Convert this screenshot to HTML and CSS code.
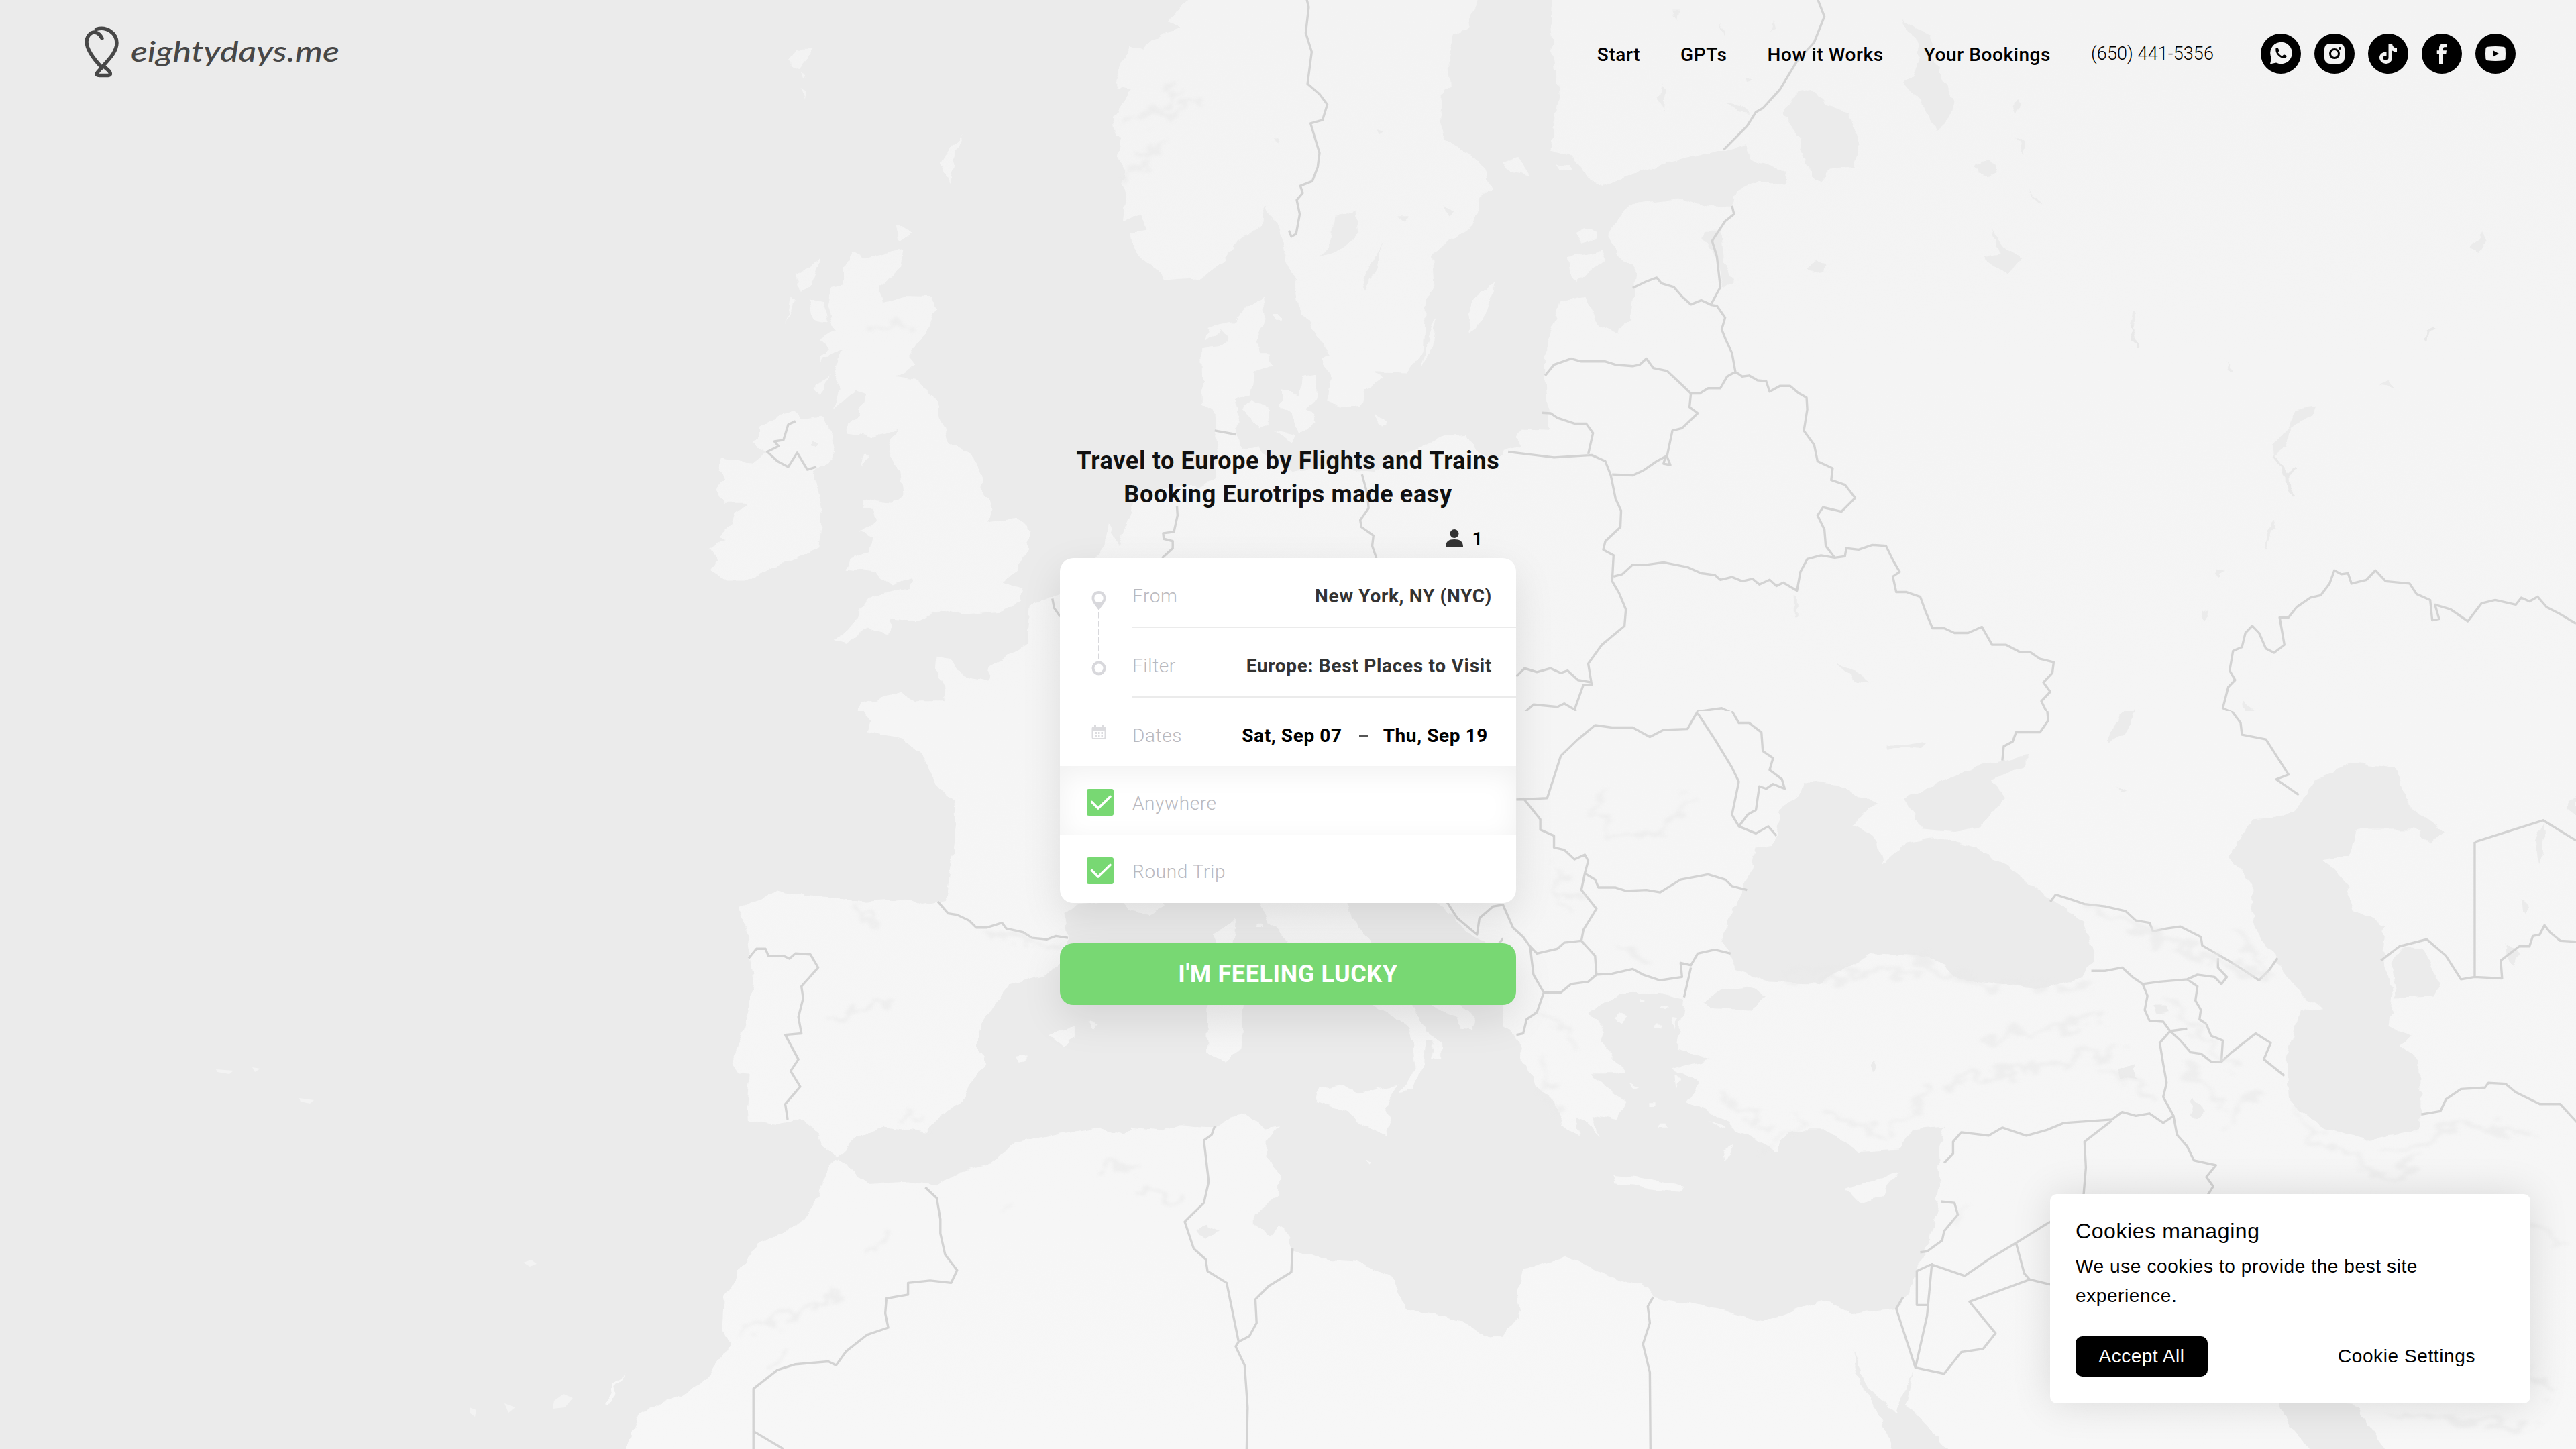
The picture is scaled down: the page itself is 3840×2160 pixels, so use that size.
FILE: index.html
```html
<!DOCTYPE html>
<html lang="en">
<head>
<meta charset="utf-8">
<title>eightydays.me</title>
<link rel="stylesheet" href="styles.css">
</head>
<body>
<svg class="map" viewBox="0 0 3840 2160" aria-hidden="true">
  <defs>
    <linearGradient id="north" gradientUnits="userSpaceOnUse" x1="0" y1="0" x2="0" y2="1568"><stop offset="0" stop-color="#f3f3f3"/><stop offset="1" stop-color="#f5f5f5"/></linearGradient>
    <linearGradient id="south" gradientUnits="userSpaceOnUse" x1="0" y1="0" x2="0" y2="1568"><stop offset="0" stop-color="#f5f5f5"/><stop offset=".7" stop-color="#f6f6f6"/><stop offset="1" stop-color="#f7f7f7"/></linearGradient>
    <filter id="coast" filterUnits="userSpaceOnUse" x="-30" y="-30" width="1628" height="1628" color-interpolation-filters="sRGB">
      <feTurbulence type="fractalNoise" baseFrequency=".04" numOctaves="2" seed="4" result="n"/>
      <feDisplacementMap in="SourceGraphic" in2="n" scale="15" xChannelSelector="R" yChannelSelector="G"/>
    </filter>
    <filter id="soft" filterUnits="userSpaceOnUse" x="-30" y="-30" width="1628" height="1628" color-interpolation-filters="sRGB">
      <feTurbulence type="fractalNoise" baseFrequency=".03" numOctaves="3" seed="9" result="n"/>
      <feDisplacementMap in="SourceGraphic" in2="n" scale="70" xChannelSelector="R" yChannelSelector="G"/>
      <feGaussianBlur stdDeviation="3"/>
    </filter>
  </defs>
  <rect class="sea" width="3840" height="2160"/>
  <g class="land-w">
    <path d="M322 1594l26 2-6 5-18-3zM376 1591l12 2-8 5zM446 1637l22 3-6 5-14-3zM780 1882l12-4 8 6-10 4zM700 2098l10 4-2 10-8-6zM752 2092l16 6-10 8zM826 2088l14-10 14 6-12 14-18 2zM905 2078l14-22 6-2-14 40z"/>
  </g>
  <svg x="900" y="0" width="1400" height="1100" viewBox="0 0 1568 1568" preserveAspectRatio="none">
    <rect class="sea" width="1568" height="1568"/>
    <g filter="url(#coast)">
      <g fill="url(#north)">
        <path d="M1000-20L960 15 942 45 968 62 940 70 915 85 900 105 880 95 870 125 855 160 862 185 880 190 865 220 850 250 853 280 862 300 858 345 872 365 865 390 872 420 868 470 900 455 903 490 880 495 882 525 900 555 930 578 935 595 1000 590 1030 560 1060 510 1100 480 1102 432 1115 465 1135 485 1130 500 1140 560 1155 600 1160 650 1185 700 1215 755 1197 765 1215 800 1210 855 1235 868 1265 862 1272 830 1300 800 1285 790 1340 792 1370 740 1372 640 1385 620 1382 540 1410 515 1450 480 1465 420 1482 400 1470 360 1450 330 1405 300 1398 260 1400 190 1412 180 1410 120 1420 75 1440 60 1465-20Z"/>
        <path d="M1100 632L1075 650 1050 685 1010 695 1005 725 1030 700 1045 715 1030 735 998 740 1000 860 1020 880 1020 915 1027 960 1017 1019 994 1038 971 1031 929 1041 888 1060 875 1107 862 1159 842 1112 837 1159 820 1186 800 1240 740 1275 710 1285 705 1370 645 1415 640 1448 600 1435 580 1400 555 1395 553 1425 568 1460 570 1490 520 1490 495 1470 430 1495 425 1510 455 1550 438 1600 1600 1600 1600 905 1520 910 1525 940 1510 960 1484 974 1459 960 1443 922 1402 926 1340 964 1284 1002 1202 993 1150 1002 1109 974 1094 950 1065 955 1055 920 1060 885 1055 850 1080 835 1085 790 1118 775 1115 750 1095 750 1090 710 1105 680Z"/>
        <path d="M1065 870L1085 850 1112 870 1112 900 1095 910ZM1130 830L1160 840 1165 800 1190 795 1190 840 1175 870 1190 895 1160 920 1150 880 1130 865ZM1120 915L1155 925 1150 940ZM1290 880L1308 895 1298 905ZM1390 670L1365 780 1382 740ZM1488 600L1450 640 1442 665 1448 710 1475 660ZM1515 335L1540 350 1535 372 1505 352Z"/>
        <path d="M415 535L435 548 500 530 495 570 460 610 465 640 500 630 550 632 555 655 530 720 510 760 520 775 490 800 520 805 550 840 560 870 575 940 610 960 635 1020 632 1050 648 1080 640 1110 690 1102 712 1130 710 1170 690 1210 665 1240 698 1250 695 1280 660 1300 600 1305 560 1295 520 1320 480 1315 475 1350 440 1335 405 1368 382 1360 410 1340 430 1290 450 1265 510 1250 515 1230 480 1245 455 1215 405 1210 410 1190 445 1170 450 1140 425 1130 455 1110 450 1080 430 1080 432 1062 480 1070 500 1050 495 1000 475 960 490 910 450 930 410 920 405 905 425 880 435 840 420 830 385 870 395 820 385 800 395 740 360 770 375 740 360 720 385 700 375 650 380 610 400 605 400 570Z"/>
        <path d="M318 872L290 885 262 905 262 930 248 940 275 960 250 985 195 972 190 1000 200 1020 188 1040 200 1070 240 1070 220 1090 215 1115 190 1140 205 1145 175 1165 190 1190 178 1210 205 1235 240 1235 270 1215 300 1195 360 1165 365 1100 358 1040 350 1000 375 985 390 960 380 940 382 920 360 885 330 890Z"/>
        <path d="M435 960L442 970 430 992ZM362 548L345 565 320 580 330 620 345 610ZM312 630L306 690 318 640ZM340 635L365 640 375 685 350 680ZM380 795L350 825 360 840ZM490 475L512 495 495 515ZM600 285L570 330 562 345 578 388 585 340ZM350 105L320 105 308 130 325 147 340 125ZM330 155l8 5-4 8zM330 185l8 10-2 16zM1120 670h10v8h-10z"/>
      </g>
      <g class="sea"><path d="M1220 460L1255 450 1258 500 1230 530 1195 545 1215 515ZM1298 518L1265 600 1270 615 1290 570ZM1325 458h22l-8 14zM1405 435l12 12-8 10zM1120 290l8 4-2 12zM1288 275l14 4-8 8zM345 935h10v12h-10z"/></g>
    </g>
    <path class="border" d="M1172-10L1177 15 1172 70 1182 110 1175 178 1195 200 1208 222 1200 255 1180 262 1195 325 1192 355 1183 385 1163 395 1167 410 1157 425 1162 455 1156 497 1148 503 1144 490M320 895L308 902 300 935 285 938 292 948 273 960 290 980 308 992 323 962 340 998 355 992M1020 915L1055 923M957 1075L958 1095 952 1130 934 1133 935 1145 950 1150 950 1165 932 1186M1266 1008L1275 1050 1277 1080 1263 1105 1265 1120 1285 1138 1283 1160 1290 1186M749 1272L752 1292 762 1310M1508 957L1568 968"/>
    <path class="relief" filter="url(#soft)" d="M870 255L930 245 985 220M890 330L950 300M930 230L960 190M880 380L910 350M450 700L500 690"/>
  </svg>
  <svg x="900" y="1060" width="1400" height="1100" viewBox="0 0 1568 1568" preserveAspectRatio="none">
    <rect class="sea" width="1568" height="1568"/>
    <g filter="url(#coast)">
      <g fill="url(#south)">
        <path d="M425-20L445 20 440 45 500 60 530 90 545 135 560 165 585 190 588 240 583 300 575 370 570 405 530 412 510 400 430 405 375 395 330 390 290 380 265 400 230 415 225 435 240 460 245 520 250 570 240 640 230 690 215 750 225 770 245 772 240 840 242 872 290 878 330 865 350 885 362 920 390 948 430 900 470 885 540 895 560 860 600 830 615 780 640 750 625 720 625 680 650 630 680 580 740 560 765 530 775 475 770 430 790 410 860 400 880 425 910 432 935 415 930 390 1090 390 1110 450 1140 480 1160 520 1300 640 1345 670 1350 700 1355 760 1330 810 1350 805 1370 750 1372 700 1385 700 1380 740 1398 740 1398 705 1375 680 1360 650 1340 600 1400 640 1425 650 1432 675 1450 678 1455 650 1430 620 1290 510 1250 440 1240 390 1360 390 1410 425 1440 470 1470 490 1500 500 1520 640 1525 680 1600 790 1600-20Z"/>
        <path d="M1055 440L1052 500 1030 510 1018 475 1040 460ZM1010 600L1070 600 1062 720 1035 745 1008 725ZM1195 800L1230 795 1260 810 1325 795 1305 840 1315 870 1305 900 1270 880 1240 850 1190 830ZM785 670L745 690 765 712 785 695ZM808 660L825 665 820 678ZM690 735l14-2 0 10-10 4zM1088 453h12v6h-12zM1272 952l8 4-4 6z"/>
        <path d="M390 955L375 970 360 1030 330 1085 255 1135 225 1190 200 1250 198 1310 210 1350 170 1420 130 1455 60 1490 30 1600 1600 1600 1600 1160 1568 1170 1525 1210 1530 1280 1505 1330 1480 1335 1440 1300 1340 1270 1315 1200 1260 1170 1200 1165 1150 1145 1140 1110 1125 1095 1115 1115 1085 1090 1085 1070 1128 1030 1128 985 1105 945 1105 915 1128 880 1105 885 1070 855 1045 862 1020 885 960 880 930 890 880 885 865 900 830 885 760 898 690 915 640 965 590 980 555 1010 510 1000 440 1005 410 975 400 958Z"/>
        <path d="M38 1408L20 1425 2 1472 12 1470 20 1435Z"/>
      </g>
      <path class="sea" d="M985 1105L1005 1090 1028 1105 1010 1122Z"/>
    </g>
    <path class="border" d="M558 405L575 430 590 433 610 445 622 460 640 460 665 450 672 462 700 470 715 482 740 485 755 478 775 482M242 525L255 505 270 505 275 520 300 520 310 526 320 515 345 517 358 545 330 585 333 610 325 650 330 685 303 688 325 740 312 765 328 798 303 835 307 868M537 1012L556 1035 562 1080 562 1110 570 1155 590 1188 580 1215 545 1210 508 1215 508 1240 472 1248 470 1280 475 1310 440 1325 405 1360 388 1390 375 1382 320 1388 290 1400 250 1440 250 1590M250 1530L300 1568M1020 882L1015 900 1002 912 1010 1000 1002 1045 970 1085 985 1142 1005 1165 1008 1190 1040 1215 1060 1340 1078 1328 1090 1300 1088 1250 1110 1222 1148 1192 1150 1142M1060 1340L1055 1350 1070 1390 1075 1480 1073 1590M1405 400L1425 440 1458 475 1462 440 1485 415 1500 412 1538 450 1530 475M1495 493L1512 468 1530 475 1550 510 1555 590 1568 600M1525 685L1545 650 1550 630 1568 625M1523 185L1568 180M1545 185L1568 250"/>
    <path class="relief" filter="url(#soft)" d="M380 655L430 645 475 610M235 1315L270 1300 330 1275 390 1245M450 1140L475 1110M270 1380L300 1370M900 1020L970 1035M670 1060L682 1050M640 470L700 490 760 500M840 965L890 975M430 425L445 445M490 875L530 865"/>
  </svg>
  <svg x="2240" y="0" width="1600" height="1100" viewBox="0 0 1568 1568" preserveAspectRatio="none">
    <rect class="sea" width="1568" height="1568"/>
    <g filter="url(#coast)">
      <g fill="url(#north)">
        <path d="M72-20L70 60 80 200 70 320 100 330 130 385 150 395 190 370 260 340 320 320 355 305 360 340 410 365 412 390 375 385 340 405 335 440 300 440 260 422 190 432 165 465 155 500 170 550 195 565 190 650 188 680 165 705 140 690 120 630 85 640 72 700 60 740 62 830 68 912 25 910 20 930 28 950-20 965-20 1600 1600 1600 1600-20Z"/>
        <path d="M105 495L120 485 138 492 138 510 115 520ZM95 545L145 530 150 550 110 600 97 575ZM0 345L25 335 42 375 10 365ZM80 350l18 2 0 10-16 0z"/>
      </g>
      <g class="sea"><path d="M450 188L475 225 505 240 522 310 510 355 480 360 463 388 450 370 430 290 412 240 430 195ZM585 38L605 60 625 75 630 130 658 215 655 245 632 275 615 225 585 175 600 160 610 120 600 80ZM706 342l13 8 2 14-12 10-14-6-4-14zM712 482L735 530 757 550 738 585 705 545 725 540ZM458 553l14 12-6 12-14 4-6-14zM295 490L320 490 322 550 335 600 325 612 310 540 292 510ZM1185 865L1160 870 1148 910 1125 945 1127 970 1145 950 1150 910 1180 885ZM1432 490L1425 510 1415 530 1425 540 1436 510ZM750 212l5 10-5 20-4-14zM752 290l8 10 4 28-8-12zM765 400l22 36-8-6zM328 218l20 6 10 18-16-2zM232 175l6 20-2 44-8-30zM248 22l8 0-2 24zM318 50l8 16-2 10zM395 40l4 20-6 4zM355 165l10 8-8 4zM1278 818l14-10 12 18-12-6zM1055 765l14 24-4 2zM488 1412l36 20 10 20-16-4zM920 660l4 6-2 30-6-6zM1126 1105l4 4-18 60-2-6zM1042 1212l12 4-8 10zM1020 1300l14-4-10 22zM1080 1485l20 26-12 4zM925 1505l-14 60-24 3 22-30zM426 1265l4 4 0 40-4 0z"/></g>
      <path class="river" d="M1127 970L1147 1010 1148 1040 1158 1055M1147 1010L1162 992M918 690L926 738M1348 725L1350 705 1362 695"/>
    </g>
    <path class="border" d="M458-10L470 35 455 90 430 130 405 190 380 230 370 238 357 268 323 318M335 437L338 455 325 470 306 512 313 545 318 610 305 645M190 612L210 598 225 590 232 602 250 610 262 630 275 647 290 638 305 648 313 650 325 675 320 700 326 722 335 750 340 790M62 798L75 775 100 762 115 768 150 768 165 775 190 778 200 775 210 762 220 782 240 788 262 818 275 836 288 836 300 825 318 825 328 800 340 790 350 800 360 798 372 808 385 810 390 832 405 820 420 820 432 835 444 845 445 870 440 915 455 945 460 980 482 995 480 1020 500 1030 515 1058 495 1087 468 1078 460 1095 470 1125 472 1160 485 1185M275 836L273 865 285 878 262 910 248 915 240 970 245 988 235 985 238 970 225 980 205 1000 190 1010 160 1008M57 877L70 878 80 888 105 900 122 900 132 920 125 965M8 960L75 972 130 967 150 980 158 1010 165 1060 173 1085 172 1120 150 1150 147 1168 162 1180 160 1235 170 1260 180 1295 178 1330 145 1370 125 1410 130 1455 118 1455 105 1508M162 1225L175 1220 190 1200 210 1200 235 1195 270 1205 290 1218 310 1222 318 1232 335 1226 350 1235 365 1230 375 1242 390 1232 400 1245 410 1238 430 1255 435 1215 445 1188 465 1180 485 1185 500 1182 502 1165 520 1168 540 1158 560 1160 570 1190 580 1215 570 1225 575 1258 590 1258 610 1268 618 1300 628 1335 645 1335 660 1345 680 1345 700 1332 715 1370 735 1370 755 1385 770 1385 785 1400 805 1407 803 1430 790 1450 800 1470 787 1490 797 1520 793 1553 760 1555 750 1580M20 1437L32 1420 50 1428 70 1420 85 1430 95 1425 110 1445 130 1450M20 1530L45 1497 80 1502 90 1495 105 1508 115 1528 135 1540 160 1542 175 1550 200 1550 215 1565 230 1550 270 1545 285 1512 320 1505 350 1525 360 1540 378 1550 382 1580M110 1568L135 1540M280 1520L300 1545 305 1580M1115 1568L1095 1560 1080 1560 1070 1540 1075 1520 1052 1505 1060 1460 1070 1445 1062 1425 1067 1383 1080 1375 1085 1345 1095 1330 1105 1345 1115 1378 1127 1387 1142 1370 1135 1312 1148 1312 1160 1290 1180 1270 1195 1265 1208 1240 1215 1212 1225 1220 1235 1218 1240 1240 1262 1232 1275 1212 1290 1235 1325 1240 1335 1262 1355 1275 1358 1318 1368 1315 1362 1285 1385 1295 1410 1320 1430 1282 1450 1275 1480 1285 1488 1270 1500 1278 1512 1268 1525 1290 1545 1305 1568 1325"/>
  </svg>
  <svg x="2240" y="1060" width="1600" height="1100" viewBox="0 0 1568 1568" preserveAspectRatio="none">
    <g filter="url(#coast)">
      <rect x="-30" y="-30" width="1628" height="1628" fill="url(#south)"/>
      <path class="sea" d="M-20 660L0 670 20 690 30 740 50 800 75 830 90 880 112 905 105 860 125 875 140 905 132 860 165 870 180 830 130 770 165 770 178 765 140 700 150 680 125 640 170 600 230 600 265 610 255 720 300 740 250 760 290 790 270 830 330 870 340 890 400 935 420 890 470 890 520 935 580 930 600 890 645 885 635 930 640 1010 625 1120 590 1240 575 1270 510 1280 470 1250 380 1298 330 1275 220 1245 210 1225 145 1195 95 1160 30 1185 20 1240 27 1285 0 1330-20 1335ZM290 620L320 590 360 585 385 605 360 635 310 632ZM440 150L490 155 520 180 550 195 510 240 545 265 555 325 590 280 640 268 690 290 740 330 800 400 850 450 865 520 845 570 790 590 720 580 670 570 620 520 540 515 500 545 460 580 390 575 340 550 320 480 340 410 360 350 370 290 395 285 410 200 435 180ZM585 185L640 150 700 115 765 95 765 115 715 145 735 185 700 245 660 255 610 250 600 215ZM1185 150L1240 108 1305 120 1320 195 1375 255 1355 280 1330 250 1250 250 1235 310 1200 315 1235 370 1245 425 1290 455 1285 530 1300 600 1295 670 1325 690 1310 710 1340 740 1340 890 1260 910 1190 880 1150 830 1145 740 1165 640 1198 630 1170 610 1135 540 1095 450 1095 370 1060 310 1095 230 1140 225 1170 190ZM1300 530L1320 500 1345 505 1370 580 1360 605 1305 608ZM1130 1450L1240 1468 1300 1590 1190 1590 1150 1520ZM510 1360L520 1420 555 1510 570 1590 665 1590 620 1520 590 1475 600 1400 575 1490 535 1440ZM562 72l30 0 24-8-8 16-24-4-20 8zM925 0l-20 50-22 18 10-30 14-40zM1520 235l2 60-10 30-4-50zM1568 175l-14 30 14 20zM540 740l6 12-4 16-8-16zM1465 495l20 20-8 28-14-20zM898 760l26-10 0 30-14-4-8 6zM1010 820l16 30-16 20-6-14zM950 625l18 0 4 14-14 4zM1485 400l12 10-2 22-8-8zM895 160l16 14-4 2z"/>
      <g fill="url(#south)"><path d="M578 980L540 1000 500 1015 520 1045 555 1030 560 1010ZM160 985L200 990 265 1010 262 1022 210 1015 165 1005ZM338 920L322 935 325 955ZM185 650L170 640 160 650 175 662ZM220 665h10v8h-10zM248 650l8 2-4 26zM250 770l6 10-4 20zM230 875h8v10h-8zM200 612h8v6h-8zM185 790l14 10-6 4zM215 830h8v8h-8zM300 870l26 14-8 4zM232 628l10 2-4 6zM150 800l10 6-6 6z"/></g>
    </g>
    <path class="border" d="M20 188L65 185 75 140 85 95 110 60 135 30 160 35 190 35 215 55 235 40 270 38 285 0M335 0L345 25 360 25 378 45 380 85 395 100 390 125 408 145 412 165 395 155 385 165 375 160 370 210 358 220 345 245 335 220 345 150 335 120 310 60 285 5M30 185L55 230 55 252 75 265 75 290 90 295 105 315 120 305 125 318 120 345 135 358 140 375 165 375 180 382 210 380 230 385 260 358 300 347 325 358 335 372 357 380M345 245L370 260 388 245 400 265M120 345L115 380 137 420 118 465 115 488 90 492 80 505 50 515 40 500 30 480 15 460 0 410M115 488L135 520 137 560 160 558 190 548 205 560 230 572 262 565 260 535 275 540 285 515 310 507 333 515M275 545L265 608M40 500L45 560 60 598 85 598 100 580 125 575 137 560M60 598L50 640 35 655 30 685 20 688M795-10L797 20 785 45 750 45 745 65 732 75 730 105M1060-10L1078 25 1080 50 1115 60 1148 135 1130 145 1163 178M800 405L808 390 830 400 850 410 880 415 910 425 925 445 945 450 950 468 970 462 990 458 1020 480 1022 498 1060 530 1082 550 1105 572 1120 550 1132 525M860 552L880 552 905 545 920 565 935 580 960 575 1000 570 1015 560 1040 565 1050 580 1058 565 1045 545 1045 525M935 580L942 605 938 635 945 658 965 660 975 680 1000 675M1028 665L1035 690 1052 700 1050 745 1065 725 1100 685 1122 705 1112 740 1142 775M1000 570L1015 585 1012 615 1020 635 1018 655 1028 665M975 680L990 700 1005 725 1020 728 1035 745 1050 745M975 680L960 705 965 750 970 790 965 820 980 860M645 960L658 940 658 915 670 895 710 902 730 885 765 902 795 890 820 875 890 868 905 852 925 860 945 855 965 875 980 860 985 900 1000 925 1010 955 1042 965 1028 990 1038 1010 1025 1040M890 870L850 915 852 970 848 1040M640 1042L660 1045 665 1070 645 1105 642 1125 620 1148 610 1150M625 1175L655 1190 675 1200 710 1165 750 1130 800 1085M750 1130L762 1195 770 1208 805 1220M770 1208L682 1255 720 1322 702 1355 670 1362 645 1408 603 1395 575 1270 585 1245M603 1395L620 1285 627 1175 605 1190 605 1262 620 1262M220 1245L212 1265 215 1300 205 1345 215 1405 216 1590M1420 278L1420 565M1420 278L1520 232 1568 275M1283 530L1310 500 1350 485 1378 520 1400 570 1420 565 1460 568 1458 530 1485 500 1500 500 1505 478 1515 475 1522 455 1530 470 1545 488 1568 490M1342 857L1370 850 1378 825 1400 803 1435 800 1440 790 1465 792 1480 810 1515 835 1545 835 1570 875"/>
    <path class="relief" filter="url(#soft)" d="M50 740L75 840M60 640L100 700M400 920L430 870M420 560L600 560M600 530L700 580 860 590M570 900L620 800M320 820L380 870M480 860L560 910M650 790L760 760 900 720M700 700L880 650M860 420L960 480 1060 540 1110 560M1070 470L1120 560M970 620L1030 700 1060 760M1160 860L1210 920 1290 1000 1350 940M1290 940L1400 880 1500 900M880 760L950 820M1000 760L1060 840M1060 880L1100 820M140 180L150 260 240 260 270 180M80 340L100 420M170 500L220 540M1500 1080L1540 1130M1500 1400L1530 1450M1290 1490L1500 1520M660 1090L680 1050"/>
  </svg>
</svg>

<header class="header">
  <a class="logo">
    <svg width="400" height="100" viewBox="0 0 400 100">
      <g class="balloon"><path d="M23.500 13.500C39 9 54 19 54 34 54 50 37 63 27 76 23 80 23 82 28 82.500H41C47 82 45 77 37 71"/><path d="M32 27C27 17 18 15 12 23 4 34 13 51 32 71"/></g>
      <text class="wordmark" x="75" y="62" textLength="311" lengthAdjust="spacingAndGlyphs">eightydays.me</text>
    </svg>
  </a>
  <nav class="nav">
    <a>Start</a><a>GPTs</a><a>How it Works</a><a>Your Bookings</a><a class="phone">(650) 441-5356</a>
  </nav>
  <div class="social">
    <svg viewBox="0 0 60 60"><circle cx="30" cy="30" r="30"/><path class="w" d="M14 45.500L16 36.500A16.300 16.300 0 1 1 23 43.500Z"/><path d="M22.500 22C24.500 20 26 21 27.500 25.500L25.800 28.200C27.500 31 29.500 32.500 32 33.500L34.500 31.200C39 32.500 39.500 33.500 37.500 36 31 39.500 20.500 30 22.500 22Z"/></svg>
    <svg viewBox="0 0 60 60"><circle cx="30" cy="30" r="30"/><rect class="w" x="15" y="15" width="30" height="30" rx="8"/><circle class="ring" cx="30" cy="30" r="6.500"/><circle cx="38" cy="22" r="2"/></svg>
    <svg viewBox="0 0 60 60"><circle cx="30" cy="30" r="30"/><path class="w" d="M30.500 15H36C36.500 19 38.500 21.500 43 22V27.500C40 27.500 38 26.700 36 25.500V36C36 41 32 45 27 45S17 41 17 36 21.500 27 27.500 27.500V33C24.500 32.500 22.300 34 22.300 36.200S24.500 40 26.700 40 30.500 38.500 30.500 36Z"/></svg>
    <svg viewBox="0 0 60 60"><circle cx="30" cy="30" r="30"/><path class="w" d="M37 15.200V20.300H34C32.500 20.300 32 21.300 32 22.800V25.300H37L36.300 30.500H32V45H26V30.500H22.700V25.300H26V22C26 17.500 28.500 15 33 15 35 15 36.500 15.100 37 15.200Z"/></svg>
    <svg viewBox="0 0 60 60"><circle cx="30" cy="30" r="30"/><path class="w" d="M18.500 19.700Q30 18.500 41.500 19.700 44.500 20 44.700 23 45.300 30 44.700 37 44.500 40 41.500 40.300 30 41.500 18.500 40.300 15.500 40 15.300 37 14.700 30 15.300 23 15.500 20 18.500 19.700Z"/><path d="M27 25.500L35 30 27 34.200Z"/></svg>
  </div>
</header>

<main class="search">
  <h1 class="title">Travel to Europe by Flights and Trains<br>Booking Eurotrips made easy</h1>
  <div class="people">
    <svg width="28" height="28" viewBox="0 0 28 28"><ellipse cx="14" cy="7.500" rx="6.500" ry="6.500"/><path d="M1 27C1 19 6 16 14 16S27 19 27 27Z"/></svg>
    <span>1</span>
  </div>
  <form class="card">
    <div class="row">
      <svg class="icon route" viewBox="0 0 24 120"><path fill="#d8d8dc" fill-rule="evenodd" d="M12 1C5.500 1 1.500 5.800 1.500 12 1.500 17.500 6 21 12 30 18 21 22.500 17.500 22.500 12 22.500 5.800 18.500 1 12 1ZM12 5.500A6 6.300 0 1 1 12 18 6 6.300 0 1 1 12 5.500Z"/><path class="dash" d="M12 33V103"/><circle class="stop" cx="12" cy="116" r="8.500"/></svg>
      <div class="field line"><span class="label">From</span><span class="value">New York, NY (NYC)</span></div>
    </div>
    <div class="row">
      <span class="icon"></span>
      <div class="field line"><span class="label">Filter</span><span class="value">Europe: Best Places to Visit</span></div>
    </div>
    <div class="row">
      <svg class="icon cal" viewBox="0 0 24 24"><rect x="2.500" y="5" width="19" height="17" rx="2"/><path class="fill" d="M2 4H22V10H2ZM5 1H8V6H5ZM16 1H19V6H16Z"/><path class="dots" d="M6.500 13.500H18M6.500 18H18"/></svg>
      <div class="field"><span class="label">Dates</span><span class="dates"><b>Sat, Sep 07</b><i></i><b>Thu, Sep 19</b></span></div>
    </div>
    <div class="row check shade">
      <svg class="box" viewBox="0 0 40 40"><rect width="40" height="40" rx="3"/><path d="M7.500 19.500L17 29 35 11.500"/></svg>
      <span class="label">Anywhere</span>
    </div>
    <div class="row check">
      <svg class="box" viewBox="0 0 40 40"><rect width="40" height="40" rx="3"/><path d="M7.500 19.500L17 29 35 11.500"/></svg>
      <span class="label">Round Trip</span>
    </div>
  </form>
  <button class="lucky">I'M FEELING LUCKY</button>
</main>

<aside class="cookies">
  <h2>Cookies managing</h2>
  <p>We use cookies to provide the best site experience.</p>
  <div class="actions"><button class="accept">Accept All</button><a>Cookie Settings</a></div>
</aside>
</body>
</html>
```
FILE: styles.css
```css
* { box-sizing: border-box; }
body {
  margin: 0;
  width: 3840px;
  height: 2160px;
  overflow: hidden;
  position: relative;
  font-family: Roboto, "Liberation Sans", sans-serif;
  font-size: 28px;
  letter-spacing: .6px;
  color: #000;
}

/* Background map */
.map { position: absolute; inset: 0; width: 3840px; height: 2160px; z-index: -1; }
.sea { fill: #ebebeb; }
.land-w { fill: #f3f3f3; }
.border, .river, .relief { fill: none; vector-effect: non-scaling-stroke; }
.border { stroke: #d3d3d3; stroke-width: 3.4; stroke-linejoin: round; }
.river { stroke: #e8e8e8; stroke-width: 4; }
.relief { stroke: #e9e9e9; stroke-width: 9; stroke-linecap: round; opacity: .6; }

/* Header */
.header { display: flex; align-items: center; height: 160px; padding: 0 90px 0 120px; }
.logo { margin-right: auto; height: 100px; }
.logo svg { display: block; }
.balloon { fill: none; stroke: #474747; stroke-width: 5.4; stroke-linecap: round; stroke-linejoin: round; }
.wordmark { font: italic 500 42px Lato, sans-serif; letter-spacing: 0; fill: #474747; }
.nav { display: flex; align-items: center; gap: 60px; padding-top: 2px; font-weight: 500; }
.nav .phone { font-weight: 300; font-size: 27px; letter-spacing: .1px; margin-top: -3px; }
.social { display: flex; gap: 20px; margin-left: 70px; }
.social svg { width: 60px; height: 60px; }
.social .w { fill: #f3f3f3; }
.social .ring { fill: none; stroke: #000; stroke-width: 3; }

/* Search form */
.search { width: 680px; margin: 502px auto 0; }
.title { margin: 0; text-align: center; font-size: 36px; line-height: 50px; font-weight: 700; color: #111; letter-spacing: .64px; white-space: nowrap; }
.people { display: flex; align-items: center; justify-content: flex-end; gap: 12px; height: 40px; margin: 20px 49px 10px 0; font-weight: 500; }
.people svg { fill: #333; }
.people span { padding-top: 2px; }
.card { background: #fff; border-radius: 20px; overflow: hidden; box-shadow: 0 20px 60px rgba(0, 0, 0, .1); }
.row { display: flex; height: 104px; padding-left: 46px; }
.row:nth-child(n+3) { height: 102px; }
.icon { width: 24px; margin-right: 38px; flex: none; }
.route { height: 120px; margin-top: 48px; overflow: visible; }
.stop { fill: none; stroke: #d8d8dc; stroke-width: 4; }
.dash { stroke: #d8d8dc; stroke-width: 2; stroke-dasharray: 8.500 3.800; }
.cal { height: 24px; margin-top: 39px; }
.cal rect { fill: none; stroke: #dcdcdf; stroke-width: 2; }
.cal .fill { fill: #dcdcdf; }
.cal .dots { stroke: #dcdcdf; stroke-width: 3; stroke-dasharray: 2.500 2; }
.field { flex: 1; display: flex; align-items: center; justify-content: space-between; padding: 10px 36px 0 0; }
.line { border-bottom: 2px solid #ebebeb; }
.label { font-weight: 300; color: #b9b9be; }
.value { font-weight: 700; color: #333; letter-spacing: .7px; }
.dates { display: flex; align-items: center; margin-right: 6px; }
.dates i { width: 14px; height: 3px; background: #555; margin: 0 22px 0 25px; }
.check { align-items: center; padding-left: 40px; }
.check .label { padding-top: 8px; }
.shade { box-shadow: inset 0 10px 40px rgba(0, 0, 0, .06); }
.box { width: 40px; height: 40px; margin: 0 28px 0 0; position: relative; top: 3px; }
.box rect { fill: #78d873; }
.box path { fill: none; stroke: #fff; stroke-width: 3.600; stroke-linecap: round; stroke-linejoin: round; }
.lucky { display: block; width: 680px; height: 92px; margin-top: 60px; padding: 0; border: 0; border-radius: 20px; background: #78d873; color: #fff; font: 700 36px Roboto, sans-serif; letter-spacing: .6px; box-shadow: 0 20px 60px rgba(0, 0, 0, .1); }

/* Cookie notice */
.cookies { position: absolute; left: 3056px; top: 1780px; width: 716px; height: 312px; padding: 34px 38px; border-radius: 10px; background: #fff; box-shadow: 0 0 60px rgba(0, 0, 0, .12); font-family: "Liberation Sans", Arial, sans-serif; }
.cookies h2 { margin: 0; font-size: 32px; line-height: 42px; font-weight: 400; }
.cookies p { margin: 10px 0 0; line-height: 44px; }
.actions { display: flex; align-items: center; justify-content: space-between; margin-top: 38px; padding-right: 44px; }
.accept { width: 197px; height: 60px; padding: 0; border: 0; border-radius: 10px; background: #000; color: #fff; font: inherit; letter-spacing: .5px; }
```
